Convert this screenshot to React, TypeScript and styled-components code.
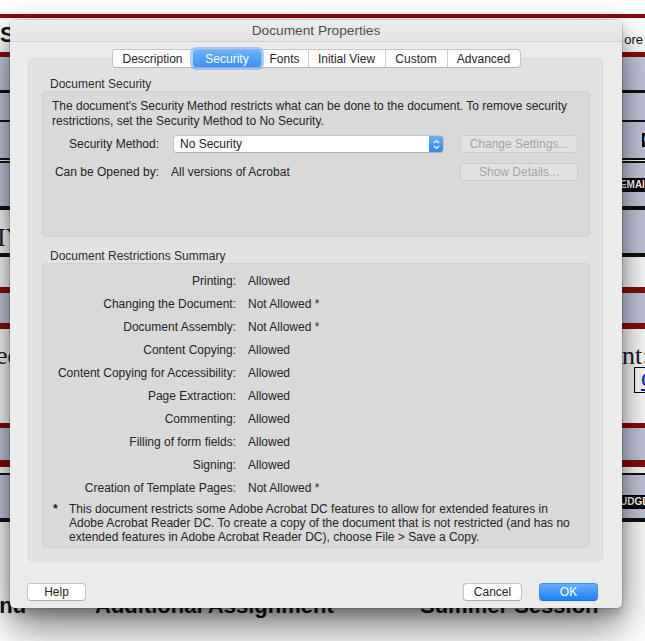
import styled, { createGlobalStyle } from "styled-components";

const GlobalStyle = createGlobalStyle`
  html, body {
    margin: 0;
    padding: 0;
    background: #fff;
  }
  body {
    overflow: hidden;
  }
`;

type Tone = "white" | "red" | "black" | "blue" | "split";

const toneBg: Record<Tone, string> = {
  white: "#fff",
  red: "#8a0c0c",
  black: "#121212",
  blue: "#c7cbe1",
  split: "linear-gradient(90deg, #fff 0 50%, #c7cbe1 50%)",
};

const tabs = [
  { name: "Description", w: 80 },
  { name: "Security", w: 68 },
  { name: "Fonts", w: 47 },
  { name: "Initial View", w: 77 },
  { name: "Custom", w: 62 },
  { name: "Advanced", w: 73 },
];

const restrictions = [
  ["Printing:", "Allowed"],
  ["Changing the Document:", "Not Allowed *"],
  ["Document Assembly:", "Not Allowed *"],
  ["Content Copying:", "Allowed"],
  ["Content Copying for Accessibility:", "Allowed"],
  ["Page Extraction:", "Allowed"],
  ["Commenting:", "Allowed"],
  ["Filling of form fields:", "Allowed"],
  ["Signing:", "Allowed"],
  ["Creation of Template Pages:", "Not Allowed *"],
];

export default function App() {
  return (
    <Page>
      <GlobalStyle />
      {/* the PDF page lying behind the dialog */}
      <Sheet>
        <Band $tone="white" $h={14} />
        <Band $tone="red" $h={4} />
        <Band $tone="white" $h={34}>
          <Heading $size={22}>S</Heading>
          <SmallText>ore</SmallText>
        </Band>
        <Band $tone="red" $h={5} />
        <Band $tone="blue" $h={33} />
        <Band $tone="black" $h={3} />
        <Band $tone="blue" $h={27} />
        <Band $tone="black" $h={2} />
        <Band $tone="blue" $h={36}>
          <span />
          <Tag $cut={8}>C</Tag>
        </Band>
        <Band $tone="black" $h={2} />
        <Band $tone="white" $h={1} />
        <Band $tone="black" $h={2} />
        <Band $tone="blue" $h={43}>
          <span />
          <Tag $cut={8}>EMAIL</Tag>
        </Band>
        <Band $tone="black" $h={4} />
        <Band $tone="split" $h={43} $align="flex-end">
          <SerifText $shift={-3}>IY</SerifText>
          <span />
        </Band>
        <Band $tone="black" $h={4} />
        <Band $tone="white" $h={30} />
        <Band $tone="red" $h={6} />
        <Band $tone="blue" $h={30} />
        <Band $tone="red" $h={6} />
        <Band $tone="white" $h={94} $align="flex-start">
          <SerifText $shift={-4} $top={12}>
            ec
          </SerifText>
          <RightNote>
            <SerifText $top={12}>nt:</SerifText>
            <LinkBox>C</LinkBox>
          </RightNote>
        </Band>
        <Band $tone="red" $h={5} />
        <Band $tone="blue" $h={32} />
        <Band $tone="red" $h={7} />
        <Band $tone="white" $h={6} />
        <Band $tone="black" $h={2} />
        <Band $tone="blue" $h={43}>
          <span />
          <Tag $cut={12} $top={11}>
            BUDGET
          </Tag>
        </Band>
        <Band $tone="black" $h={4} />
        <Band $tone="white" $h={71} />
        <BottomHeadings>
          <Heading $size={22} $shift={-13}>
            and
          </Heading>
          <Heading $size={22}>Additional Assignment</Heading>
          <Heading $size={22}>Summer Session</Heading>
        </BottomHeadings>
      </Sheet>

      <Dialog>
        <TitleBar>Document Properties</TitleBar>
        <Body>
          <TabStrip>
            {tabs.map((t) => (
              <Tab key={t.name} $w={t.w} $active={t.name === "Security"}>
                {t.name}
              </Tab>
            ))}
          </TabStrip>
          <TabPanel>
            <GroupTitle>Document Security</GroupTitle>
            <Group $h={147}>
              <Desc>
                The document's Security Method restricts what can be done to the document. To remove security
                <br />
                restrictions, set the Security Method to No Security.
              </Desc>
              <FieldGrid>
                <FieldLabel>Security Method:</FieldLabel>
                <Select>
                  <SelectText>No Security</SelectText>
                  <Stepper>
                    <svg width="7" height="11" viewBox="0 0 7 11">
                      <path d="M1 4 L3.5 1.5 L6 4 M1 7 L3.5 9.5 L6 7" fill="none" stroke="#fff" strokeWidth="1.2" />
                    </svg>
                  </Stepper>
                </Select>
                <PushButton disabled>Change Settings...</PushButton>
                <FieldLabel>Can be Opened by:</FieldLabel>
                <FieldValue>All versions of Acrobat</FieldValue>
                <PushButton disabled>Show Details...</PushButton>
              </FieldGrid>
            </Group>
            <GroupTitle $gap={12}>Document Restrictions Summary</GroupTitle>
            <Group $h={286}>
              <RestrictionList>
                {restrictions.map(([label, value]) => (
                  <RestrictionRow key={label}>
                    <RestrictionLabel>{label}</RestrictionLabel>
                    <span>{value}</span>
                  </RestrictionRow>
                ))}
              </RestrictionList>
              <Footnote>
                <Star>*</Star>
                <span>
                  This document restricts some Adobe Acrobat DC features to allow for extended features in
                  <br />
                  Adobe Acrobat Reader DC. To create a copy of the document that is not restricted (and has no
                  <br />
                  extended features in Adobe Acrobat Reader DC), choose File &gt; Save a Copy.
                </span>
              </Footnote>
            </Group>
          </TabPanel>
          <Footer>
            <DialogButton>Help</DialogButton>
            <FooterRight>
              <DialogButton>Cancel</DialogButton>
              <DialogButton $primary>OK</DialogButton>
            </FooterRight>
          </Footer>
        </Body>
      </Dialog>
    </Page>
  );
}

const Page = styled.div`
  position: relative;
  width: 645px;
  height: 641px;
  overflow: hidden;
  background: #fff;
`;

const Sheet = styled.div`
  display: flex;
  flex-direction: column;
  width: 645px;
`;

const Band = styled.div<{ $tone: Tone; $h: number; $align?: string }>`
  flex: none;
  height: ${(p) => p.$h}px;
  background: ${(p) => toneBg[p.$tone]};
  display: flex;
  justify-content: space-between;
  align-items: ${(p) => p.$align ?? "center"};
  overflow: visible;
`;

const Heading = styled.span<{ $size: number; $shift?: number }>`
  font-family: "Liberation Sans", Arial, sans-serif;
  font-weight: 700;
  font-size: ${(p) => p.$size}px;
  line-height: 26px;
  color: #111;
  white-space: nowrap;
  margin-left: ${(p) => p.$shift ?? 0}px;
`;

const SmallText = styled.span`
  font-family: "Liberation Sans", Arial, sans-serif;
  font-size: 13px;
  color: #111;
  margin: 8px 2px 0 0;
`;

const SerifText = styled.span<{ $shift?: number; $top?: number }>`
  font-family: "Liberation Serif", "Times New Roman", serif;
  font-size: 26px;
  line-height: 30px;
  color: #1b1b2e;
  white-space: nowrap;
  margin-left: ${(p) => p.$shift ?? 0}px;
  margin-top: ${(p) => p.$top ?? 0}px;
`;

const Tag = styled.span<{ $cut: number; $top?: number }>`
  background: #000;
  color: #fff;
  font-family: "Liberation Sans", Arial, sans-serif;
  font-weight: 700;
  font-size: 10px;
  line-height: 12px;
  padding: 1px 2px;
  margin-right: -${(p) => p.$cut}px;
  margin-top: ${(p) => p.$top ?? 0}px;
`;

const RightNote = styled.div`
  display: flex;
  flex-direction: column;
  width: 23px;
`;

const LinkBox = styled.span`
  margin: -4px 0 0 12px;
  width: 30px;
  height: 24px;
  border: 1px solid #000;
  font-family: "Liberation Serif", "Times New Roman", serif;
  font-size: 22px;
  line-height: 24px;
  color: #1a1ad8;
  text-decoration: underline;
  padding-left: 6px;
`;

const BottomHeadings = styled.div`
  display: grid;
  grid-template-columns: 95px 325px 1fr;
  align-items: start;
`;

const Dialog = styled.div`
  position: absolute;
  left: 10px;
  top: 20px;
  width: 612px;
  height: 588px;
  display: flex;
  flex-direction: column;
  background: #ebebeb;
  border-radius: 5px;
  box-shadow: 0 0 0 0.5px rgba(0, 0, 0, 0.22), 0 18px 40px rgba(0, 0, 0, 0.55), 0 6px 12px rgba(0, 0, 0, 0.2);
  overflow: hidden;
  font-family: "Liberation Sans", Arial, sans-serif;
  color: #242424;
`;

const TitleBar = styled.div`
  flex: none;
  height: 21px;
  display: flex;
  align-items: center;
  justify-content: center;
  background: linear-gradient(#ececec, #e4e4e4);
  border-bottom: 1px solid #d2d2d2;
  font-size: 13.7px;
  color: #4d4d4d;
`;

const Body = styled.div`
  flex: 1;
  display: flex;
  flex-direction: column;
  padding: 7px 19px 0 18px;
`;

const TabStrip = styled.div`
  align-self: center;
  position: relative;
  z-index: 1;
  display: flex;
  height: 19px;
  margin-left: 1px;
  background: #fff;
  border: 1px solid #c4c4c4;
  border-bottom-color: #b3b3b3;
  border-radius: 4px;
  box-sizing: border-box;
`;

const Tab = styled.button<{ $w: number; $active: boolean }>`
  width: ${(p) => p.$w}px;
  height: 17px;
  padding: 0;
  border: none;
  border-left: 1px solid ${(p) => (p.$active ? "transparent" : "#d0d0d0")};
  font-family: "Liberation Sans", Arial, sans-serif;
  font-size: 12px;
  color: ${(p) => (p.$active ? "#fff" : "#262626")};
  background: ${(p) => (p.$active ? "linear-gradient(#6ab2fb, #3d91f7)" : "transparent")};
  border-radius: ${(p) => (p.$active ? "3px" : "0")};
  box-shadow: ${(p) => (p.$active ? "0 0 0 3px rgba(110, 170, 245, 0.55)" : "none")};
  position: relative;
  z-index: ${(p) => (p.$active ? 1 : 0)};
  &:first-child {
    border-left: none;
  }
`;

const TabPanel = styled.div`
  margin-top: -10px;
  height: 504px;
  box-sizing: border-box;
  display: flex;
  flex-direction: column;
  padding: 18px 12px 13px 13px;
  background: #e2e2e2;
  border: 1px solid #d9d9d9;
  border-radius: 5px;
`;

const GroupTitle = styled.div<{ $gap?: number }>`
  margin: ${(p) => p.$gap ?? 0}px 0 0 8px;
  font-size: 12px;
  line-height: 14px;
  color: #2c2c2c;
`;

const Group = styled.div<{ $h: number }>`
  height: ${(p) => p.$h}px;
  box-sizing: border-box;
  display: flex;
  flex-direction: column;
  background: #d9d9d9;
  border: 1px solid #d1d1d1;
  border-radius: 4px;
`;

const Desc = styled.p`
  margin: 0;
  padding: 7px 9px 0;
  font-size: 12px;
  line-height: 15px;
  white-space: nowrap;
`;

const FieldGrid = styled.div`
  display: grid;
  grid-template-columns: 116px 273px 118px;
  column-gap: 14px;
  row-gap: 10px;
  align-items: center;
  margin-top: 6px;
  font-size: 12px;
`;

const FieldLabel = styled.span`
  text-align: right;
  white-space: nowrap;
`;

const FieldValue = styled.span`
  margin-left: -2px;
`;

const Select = styled.div`
  width: 271px;
  height: 18px;
  box-sizing: border-box;
  display: flex;
  background: #fff;
  border: 1px solid #c6c6c6;
  border-bottom-color: #aeaeae;
  border-radius: 4px;
  overflow: hidden;
`;

const SelectText = styled.span`
  flex: 1;
  padding-left: 6px;
  line-height: 16px;
`;

const Stepper = styled.span`
  width: 14px;
  display: flex;
  align-items: center;
  justify-content: center;
  background: linear-gradient(#67affa, #2f88f6);
`;

const PushButton = styled.button`
  width: 118px;
  height: 18px;
  padding: 0;
  font-family: "Liberation Sans", Arial, sans-serif;
  font-size: 12px;
  color: #a4a4a4;
  background: #e2e2e2;
  border: 1px solid #cbcbcb;
  border-radius: 4px;
`;

const RestrictionList = styled.div`
  display: flex;
  flex-direction: column;
  padding-top: 5px;
  font-size: 12px;
`;

const RestrictionRow = styled.div`
  display: grid;
  grid-template-columns: 193px 1fr;
  column-gap: 12px;
  height: 23px;
  align-items: center;
  white-space: nowrap;
`;

const RestrictionLabel = styled.span`
  text-align: right;
`;

const Footnote = styled.div`
  display: flex;
  margin-top: 3px;
  padding-left: 10px;
  font-size: 12px;
  line-height: 14px;
  white-space: nowrap;
`;

const Star = styled.span`
  width: 16px;
  font-weight: 700;
`;

const Footer = styled.div`
  display: flex;
  justify-content: space-between;
  align-items: center;
  margin: 21px 5px 0 -1px;
`;

const FooterRight = styled.div`
  display: flex;
  gap: 17px;
`;

const DialogButton = styled.button<{ $primary?: boolean }>`
  width: 59px;
  height: 18px;
  padding: 0;
  font-family: "Liberation Sans", Arial, sans-serif;
  font-size: 12px;
  color: ${(p) => (p.$primary ? "#fff" : "#262626")};
  background: ${(p) => (p.$primary ? "linear-gradient(#68b0fb, #1d80f6)" : "#fff")};
  border: 1px solid ${(p) => (p.$primary ? "#3b8ef2" : "#c4c4c4")};
  border-bottom-color: ${(p) => (p.$primary ? "#1a6fe0" : "#acacac")};
  border-radius: 4px;
`;
